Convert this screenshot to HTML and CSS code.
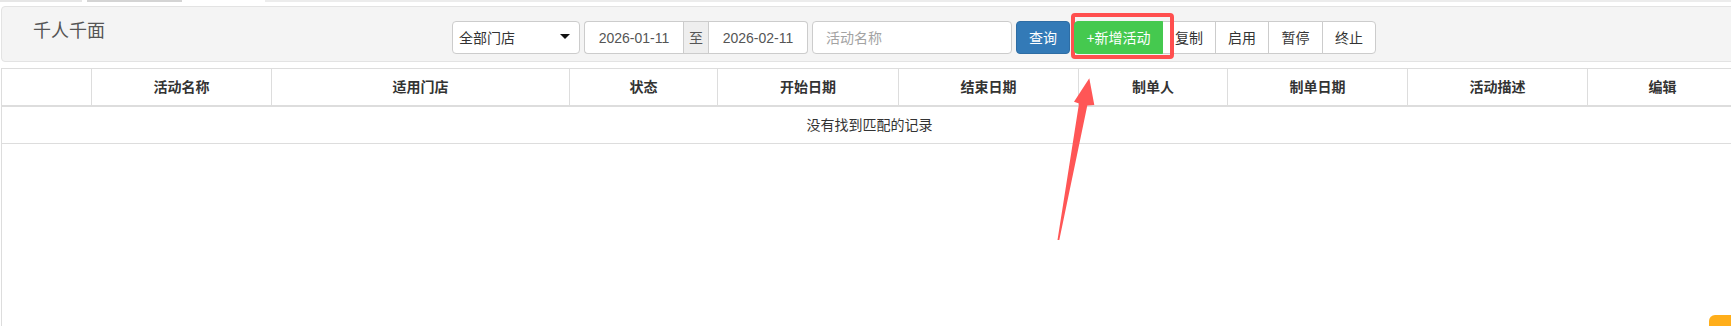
FILE: index.html
```html
<!DOCTYPE html>
<html lang="zh-CN">
<head>
<meta charset="utf-8">
<title>千人千面</title>
<link rel="stylesheet" href="styles.css">
</head>
<body>
<div class="tabs-strip">
  <span class="tab tab-a"></span>
  <span class="tab tab-b"></span>
  <span class="tab tab-c"></span>
</div>
<div class="page">
  <div class="panel">
    <div class="title">千人千面</div>
    <div class="tools">
      <div class="select">
        <span>全部门店</span>
        <span class="caret"></span>
      </div>
      <div class="date-group">
        <span class="date date-first">2026-01-11</span>
        <span class="addon">至</span>
        <span class="date date-last">2026-02-11</span>
      </div>
      <div class="text-input">活动名称</div>
      <button class="btn btn-primary">查询</button>
      <div class="btn-group">
        <button class="btn btn-success">+新增活动</button>
        <button class="btn btn-default w53">复制</button>
        <button class="btn btn-default w53">启用</button>
        <button class="btn btn-default w54">暂停</button>
        <button class="btn btn-default w53 last">终止</button>
      </div>
    </div>
  </div>

  <div class="table-wrap">
    <table class="grid">
      <colgroup>
        <col class="c0"><col class="c1"><col class="c2"><col class="c3"><col class="c4">
        <col class="c5"><col class="c6"><col class="c7"><col class="c8"><col class="c9">
      </colgroup>
      <thead>
        <tr>
          <th class="first"></th>
          <th>活动名称</th>
          <th>适用门店</th>
          <th>状态</th>
          <th>开始日期</th>
          <th>结束日期</th>
          <th>制单人</th>
          <th>制单日期</th>
          <th>活动描述</th>
          <th>编辑</th>
        </tr>
      </thead>
      <tbody>
        <tr>
          <td colspan="10" class="empty">没有找到匹配的记录</td>
        </tr>
      </tbody>
    </table>
  </div>
</div>

<svg class="annotation" width="1731" height="326" viewBox="0 0 1731 326" xmlns="http://www.w3.org/2000/svg">
  <rect x="1073" y="15" width="99" height="42" rx="2" ry="2" fill="none" stroke="#ff4f4f" stroke-width="4"/>
  <polygon points="1057.5,240 1079,103.5 1074,101.7 1089.3,78.3 1094.3,105 1087.3,105.5 1059.3,240" fill="#ff5656"/>
</svg>

<div class="float-widget"></div>
</body>
</html>
```

FILE: styles.css
```css
* {
  box-sizing: border-box;
}

html, body {
  margin: 0;
  padding: 0;
}

body {
  position: relative;
  width: 1731px;
  height: 326px;
  overflow: hidden;
  background: #ffffff;
  font-family: "Liberation Sans", "Noto Sans CJK SC", sans-serif;
  font-size: 14px;
  color: #333333;
}

/* thin tab remnants at the very top */
.tabs-strip {
  display: flex;
  height: 2px;
}

.tab {
  display: block;
  height: 2px;
}

.tab-a {
  width: 82px;
  background: #e6e6e6;
}

.tab-b {
  width: 95px;
  margin-left: 5px;
  background: #d4d4d4;
}

.tab-c {
  flex: 1;
  margin-left: 83px;
  background: #ececec;
}

.page {
  width: 1737px;
  padding-left: 1px;
  padding-top: 4px;
}

/* search panel */
.panel {
  display: flex;
  align-items: flex-start;
  height: 56px;
  padding: 14px 0 0 31px;
  background: #f4f4f4;
  border: 1px solid #e3e3e3;
  border-radius: 4px;
}

.title {
  flex: 0 0 419px;
  font-size: 18px;
  line-height: 20px;
  color: #555555;
}

.tools {
  display: flex;
  align-items: stretch;
  gap: 4px;
  height: 33px;
}

.select {
  display: flex;
  align-items: center;
  justify-content: space-between;
  width: 128px;
  padding: 0 9px 0 6px;
  background: #ffffff;
  border: 1px solid #cccccc;
  border-radius: 4px;
  color: #333333;
  line-height: 20px;
}

.caret {
  width: 0;
  height: 0;
  border-left: 5px solid transparent;
  border-right: 5px solid transparent;
  border-top: 5px solid #111111;
  margin-top: -2px;
}

.date-group {
  display: flex;
  width: 224px;
}

.date {
  display: flex;
  align-items: center;
  justify-content: center;
  background: #ffffff;
  border: 1px solid #cccccc;
  color: #555555;
  line-height: 20px;
}

.date-first {
  width: 99px;
  border-right: none;
  border-radius: 4px 0 0 4px;
}

.date-last {
  flex: 1;
  border-left: none;
  border-radius: 0 4px 4px 0;
}

.addon {
  display: flex;
  align-items: center;
  justify-content: center;
  width: 26px;
  background: #eeeeee;
  border: 1px solid #cccccc;
  color: #555555;
  line-height: 20px;
}

.text-input {
  display: flex;
  align-items: center;
  width: 200px;
  padding-left: 13px;
  background: #ffffff;
  border: 1px solid #cccccc;
  border-radius: 4px;
  color: #a3a3a3;
  line-height: 20px;
}

.btn {
  display: flex;
  align-items: center;
  justify-content: center;
  margin: 0;
  padding: 0;
  font-family: inherit;
  font-size: 14px;
  line-height: 20px;
  border: 1px solid #cccccc;
  background: #ffffff;
  color: #333333;
  cursor: pointer;
}

.btn-primary {
  width: 54px;
  background: #337ab7;
  border-color: #2e6da4;
  color: #ffffff;
  border-radius: 4px;
}

.btn-group {
  display: flex;
}

.btn-group .btn + .btn {
  margin-left: -1px;
}

.btn-success {
  width: 89px;
  background: #45c94f;
  border-color: #45c94f;
  color: #ffffff;
  border-radius: 4px 0 0 4px;
  position: relative;
  z-index: 1;
}

.w53 {
  width: 54px;
}

.w54 {
  width: 55px;
}

.btn-default.last {
  border-radius: 0 4px 4px 0;
}

/* table */
.table-wrap {
  margin-top: 6px;
  height: 270px;
  border-top: 1px solid #dddddd;
  border-left: 1px solid #dddddd;
  background: #ffffff;
}

.grid {
  width: 1735px;
  table-layout: fixed;
  border-collapse: separate;
  border-spacing: 0;
}

.c0 { width: 89px; }
.c1 { width: 180px; }
.c2 { width: 298px; }
.c3 { width: 148px; }
.c4 { width: 181px; }
.c5 { width: 180px; }
.c6 { width: 149px; }
.c7 { width: 180px; }
.c8 { width: 180px; }
.c9 { width: 150px; }

.grid th {
  height: 38px;
  padding: 0 0 1px 0;
  font-weight: bold;
  font-size: 14px;
  line-height: 20px;
  text-align: center;
  color: #333333;
  border-left: 1px solid #dddddd;
  border-bottom: 2px solid #dddddd;
  vertical-align: middle;
}

.grid th.first {
  border-left: none;
}

.grid td.empty {
  height: 37px;
  padding: 0;
  text-align: center;
  vertical-align: middle;
  line-height: 20px;
  color: #333333;
  border-bottom: 1px solid #dddddd;
}

/* annotation overlay */
.annotation {
  position: absolute;
  left: 0;
  top: 0;
  pointer-events: none;
}

.float-widget {
  position: absolute;
  right: 0;
  bottom: 0;
  width: 22px;
  height: 11px;
  background: #ffae1a;
  border-top-left-radius: 6px;
}
```
